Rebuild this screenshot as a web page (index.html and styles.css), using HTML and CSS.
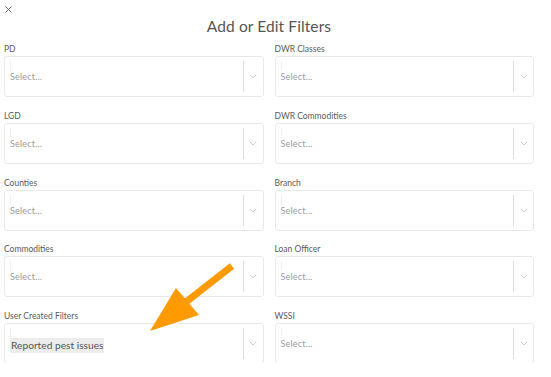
FILE: index.html
```html
<!DOCTYPE html>
<html>
<head>
<meta charset="utf-8">
<link rel="stylesheet" href="styles.css">
</head>
<body>
<div class="modal">
  <div class="close"><svg width="7" height="7" viewBox="0 0 7 7"><path d="M0.5,0.5 L6.5,6.5 M6.5,0.5 L0.5,6.5" stroke="#555" stroke-width="0.9" fill="none"/></svg></div>
  <h1 class="title">Add or Edit Filters</h1>
  <div class="scroller">
    <div class="fields">
      <div class="field"><div class="label">PD</div><div class="select"><div class="value"><span class="caret"></span><span class="ph">Select...</span></div><span class="sep"></span><span class="chev"><svg width="8" height="5" viewBox="0 0 8 5"><polyline points="1,1 4,4 7,1" fill="none" stroke="#c8c8c8" stroke-width="0.9"/></svg></span></div></div>
      <div class="field"><div class="label">DWR Classes</div><div class="select"><div class="value"><span class="caret"></span><span class="ph">Select...</span></div><span class="sep"></span><span class="chev"><svg width="8" height="5" viewBox="0 0 8 5"><polyline points="1,1 4,4 7,1" fill="none" stroke="#c8c8c8" stroke-width="0.9"/></svg></span></div></div>
      <div class="field"><div class="label">LGD</div><div class="select"><div class="value"><span class="caret"></span><span class="ph">Select...</span></div><span class="sep"></span><span class="chev"><svg width="8" height="5" viewBox="0 0 8 5"><polyline points="1,1 4,4 7,1" fill="none" stroke="#c8c8c8" stroke-width="0.9"/></svg></span></div></div>
      <div class="field"><div class="label">DWR Commodities</div><div class="select"><div class="value"><span class="caret"></span><span class="ph">Select...</span></div><span class="sep"></span><span class="chev"><svg width="8" height="5" viewBox="0 0 8 5"><polyline points="1,1 4,4 7,1" fill="none" stroke="#c8c8c8" stroke-width="0.9"/></svg></span></div></div>
      <div class="field"><div class="label">Counties</div><div class="select"><div class="value"><span class="caret"></span><span class="ph">Select...</span></div><span class="sep"></span><span class="chev"><svg width="8" height="5" viewBox="0 0 8 5"><polyline points="1,1 4,4 7,1" fill="none" stroke="#c8c8c8" stroke-width="0.9"/></svg></span></div></div>
      <div class="field"><div class="label">Branch</div><div class="select"><div class="value"><span class="caret"></span><span class="ph">Select...</span></div><span class="sep"></span><span class="chev"><svg width="8" height="5" viewBox="0 0 8 5"><polyline points="1,1 4,4 7,1" fill="none" stroke="#c8c8c8" stroke-width="0.9"/></svg></span></div></div>
      <div class="field"><div class="label">Commodities</div><div class="select"><div class="value"><span class="caret"></span><span class="ph">Select...</span></div><span class="sep"></span><span class="chev"><svg width="8" height="5" viewBox="0 0 8 5"><polyline points="1,1 4,4 7,1" fill="none" stroke="#c8c8c8" stroke-width="0.9"/></svg></span></div></div>
      <div class="field"><div class="label">Loan Officer</div><div class="select"><div class="value"><span class="caret"></span><span class="ph">Select...</span></div><span class="sep"></span><span class="chev"><svg width="8" height="5" viewBox="0 0 8 5"><polyline points="1,1 4,4 7,1" fill="none" stroke="#c8c8c8" stroke-width="0.9"/></svg></span></div></div>
      <div class="field"><div class="label">User Created Filters</div><div class="select"><div class="value"><span class="caret"></span><span class="chip">Reported pest issues</span></div><span class="sep"></span><span class="chev"><svg width="8" height="5" viewBox="0 0 8 5"><polyline points="1,1 4,4 7,1" fill="none" stroke="#c8c8c8" stroke-width="0.9"/></svg></span></div></div>
      <div class="field"><div class="label">WSSI</div><div class="select"><div class="value"><span class="caret"></span><span class="ph">Select...</span></div><span class="sep"></span><span class="chev"><svg width="8" height="5" viewBox="0 0 8 5"><polyline points="1,1 4,4 7,1" fill="none" stroke="#c8c8c8" stroke-width="0.9"/></svg></span></div></div>
    </div>
  </div>
  <svg class="arrow" width="551" height="377" viewBox="0 0 551 377">
    <line x1="232" y1="266" x2="186" y2="302" stroke="#ff9b00" stroke-width="7"/>
    <polygon points="176,288 150,331 199,315" fill="#ff9b00"/>
  </svg>
</div>
</body>
</html>
```

FILE: styles.css
```css
html, body {
  margin: 0;
  padding: 0;
  background: #fff;
}
body {
  font-family: Lato, "Noto Sans", sans-serif;
  color: #555;
}
.modal {
  position: relative;
  width: 551px;
  height: 377px;
  overflow: hidden;
}
.close {
  height: 17px;
  padding: 6px 0 0 5px;
  box-sizing: border-box;
}
.close svg {
  display: block;
}
.title {
  margin: 0;
  height: 18px;
  line-height: 18px;
  font-size: 15.5px;
  font-weight: 400;
  text-align: center;
  color: #555;
  padding: 0 17px 0 4px;
  letter-spacing: 0.1px;
}
.scroller {
  margin-top: 8px;
  height: 320px;
  overflow: hidden;
  padding: 0 17px 0 4px;
}
.fields {
  display: grid;
  grid-template-columns: 1fr 1fr;
  column-gap: 11px;
  row-gap: 12.75px;
}
.label {
  height: 12px;
  line-height: 12px;
  font-size: 8.5px;
  color: #5a5a5a;
  margin-bottom: 1px;
}
.select {
  height: 41px;
  box-sizing: border-box;
  border: 1px solid #e9e9e9;
  border-radius: 3px;
  display: flex;
  align-items: center;
}
.value {
  flex: 1;
  height: 100%;
  display: grid;
  padding-left: 5px;
}
.caret {
  grid-area: 1 / 1;
  align-self: start;
  margin-top: 4px;
  width: 1px;
  height: 10px;
  background: #efefef;
}
.ph {
  grid-area: 1 / 1;
  align-self: center;
  font-size: 9px;
  color: #9a9a9a;
  letter-spacing: 0.2px;
}
.chip {
  grid-area: 1 / 1;
  align-self: center;
  justify-self: start;
  margin-top: 3px;
  font-size: 10.2px;
  line-height: 15px;
  padding: 0 1px;
  background: #ececec;
  color: #555;
}
.sep {
  width: 1px;
  height: 31px;
  background: #dedede;
}
.chev {
  width: 19px;
  display: flex;
  justify-content: center;
  align-items: center;
}
.chev svg {
  display: block;
}
.arrow {
  position: absolute;
  left: 0;
  top: 0;
  pointer-events: none;
}
```
